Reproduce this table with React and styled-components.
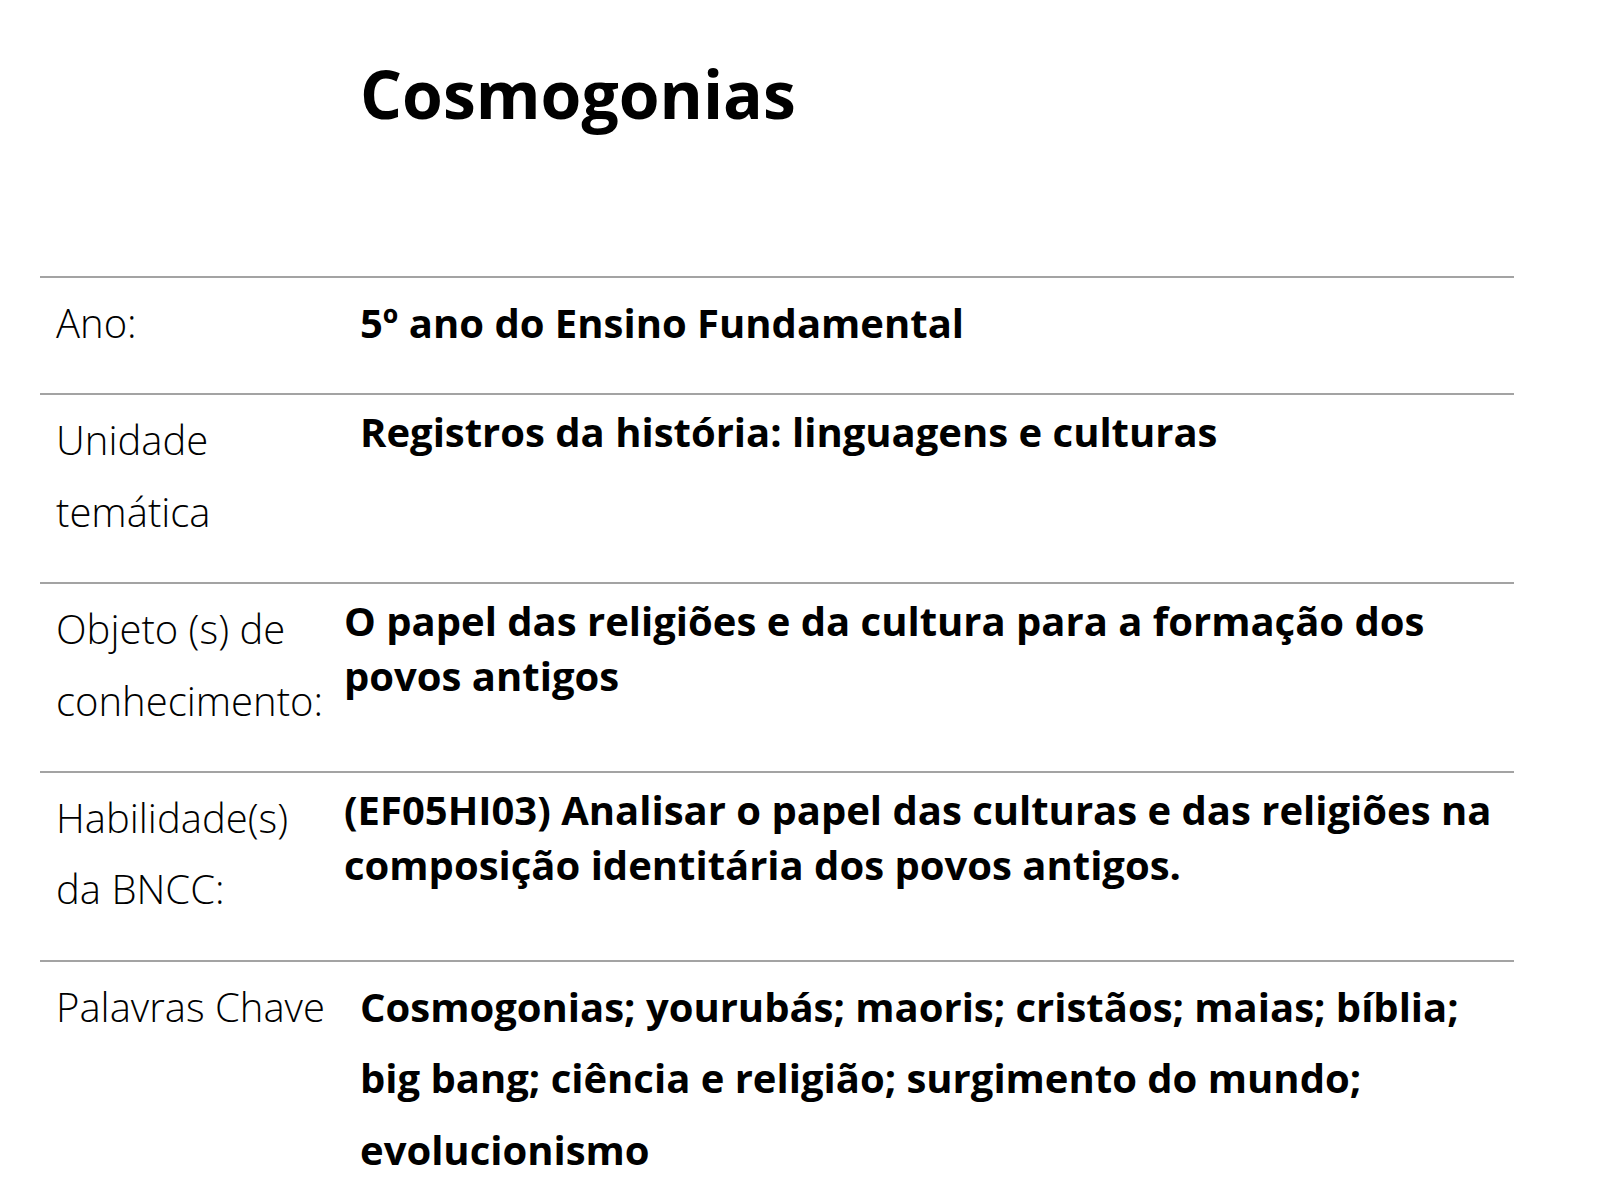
import React from "react";
import styled, { createGlobalStyle } from "styled-components";

const GlobalStyle = createGlobalStyle`
  body {
    margin: 0;
    background: #ffffff;
    color: #000000;
    font-family: "Open Sans", "Noto Sans", sans-serif;
  }
`;

const StyledPage = styled.div`
  width: 1474px;
  padding: 48px 0 0 40px;
`;

const Title = styled.h1`
  margin: 0 0 0 320px;
  font-size: 66px;
  font-weight: 700;
  line-height: 90px;
`;

const Sheet = styled.div`
  margin-top: 138px;
`;

const Row = styled.div`
  display: grid;
  grid-template-columns: 288px 1fr;
  border-top: 2px solid #a3a3a3;
  padding: 9px 0 35px;
`;

const Label = styled.div`
  padding-left: 16px;
  font-size: 40px;
  font-weight: 300;
  line-height: 71.4px;
`;

const Value = styled.div`
  padding: 0 12px 0 ${(p) => (p.$indent ? "32px" : "16px")};
  font-size: 40px;
  font-weight: 700;
  line-height: ${(p) => (p.$tight ? "55px" : "71.4px")};
`;

const rows = [
  { label: "Ano:", value: "5º ano do Ensino Fundamental", indent: true },
  {
    label: "Unidade temática",
    value: "Registros da história: linguagens e culturas",
    indent: true,
    tight: true,
  },
  {
    label: "Objeto (s) de conhecimento:",
    value: "O papel das religiões e da cultura para a formação dos povos antigos",
    tight: true,
  },
  {
    label: "Habilidade(s) da BNCC:",
    value:
      "(EF05HI03) Analisar o papel das culturas e das religiões na composição identitária dos povos antigos.",
    tight: true,
  },
  {
    label: "Palavras Chave",
    value:
      "Cosmogonias; yourubás; maoris; cristãos; maias; bíblia; big bang; ciência e religião; surgimento do mundo; evolucionismo",
    indent: true,
  },
];

const App = () => {
  return (
    <>
      <GlobalStyle />
      <StyledPage>
        <Title>Cosmogonias</Title>
        <Sheet>
          {rows.map((row) => (
            <Row key={row.label}>
              <Label>{row.label}</Label>
              <Value $indent={row.indent} $tight={row.tight}>
                {row.value}
              </Value>
            </Row>
          ))}
        </Sheet>
      </StyledPage>
    </>
  );
};

export default App;
